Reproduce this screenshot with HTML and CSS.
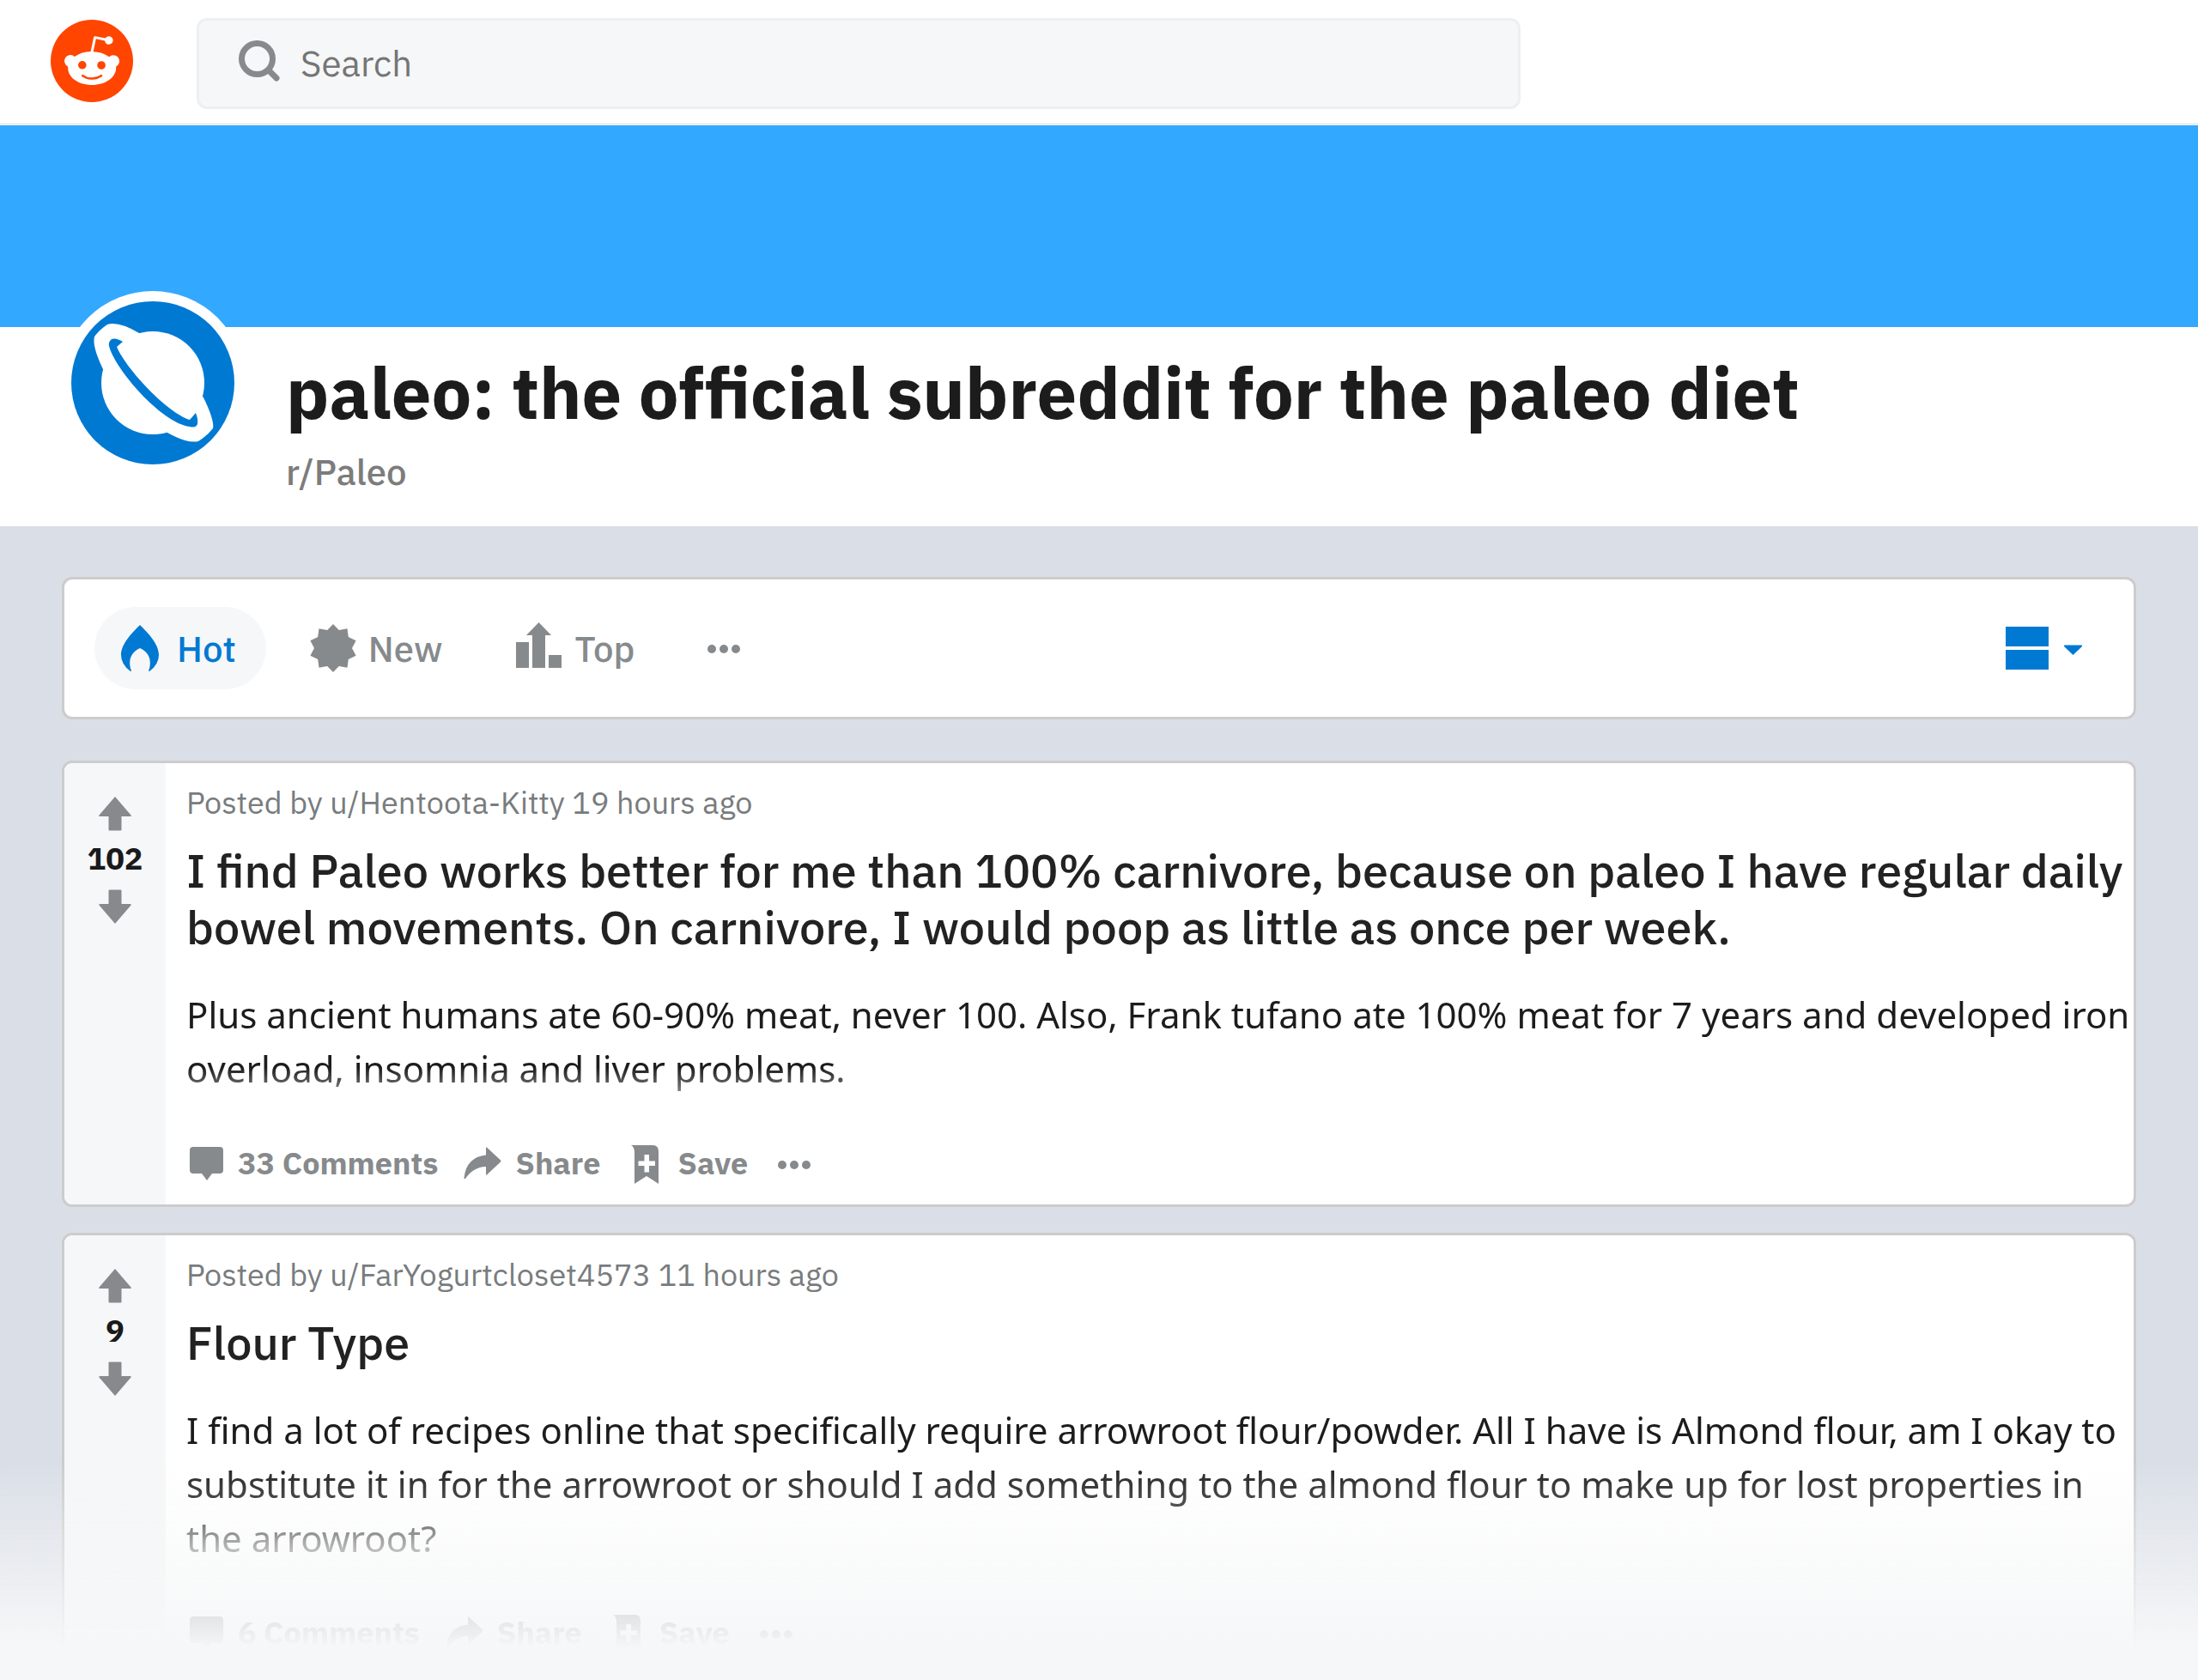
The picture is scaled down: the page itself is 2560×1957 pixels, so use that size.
FILE: index.html
```html
<!DOCTYPE html>
<html lang="en">
<head>
    <meta charset="UTF-8">
    <meta name="viewport" content="width=device-width, initial-scale=1.0">
    <title>paleo: the official subreddit for the paleo diet</title>
    <link rel="stylesheet" href="styles.css">
</head>
<body>
    <!-- Shared icons -->
    <svg class="sprite" aria-hidden="true">
        <symbol id="icon-up" viewBox="0 0 48 48">
            <path d="M24 4 42.500 25.500Q43.500 27 41.500 27H31.500V42.500Q31.500 43.500 30.500 43.500H17.500Q16.500 43.500 16.500 42.500V27H6.500Q4.500 27 5.500 25.500Z"/>
        </symbol>
        <symbol id="icon-down" viewBox="0 0 48 48">
            <path d="M24 44 42.500 22.500Q43.500 21 41.500 21H31.500V5.500Q31.500 4.500 30.500 4.500H17.500Q16.500 4.500 16.500 5.500V21H6.500Q4.500 21 5.500 22.500Z"/>
        </symbol>
        <symbol id="icon-comment" viewBox="0 0 48 48">
            <path d="M8 4H39Q43 4 43 8V31Q43 35 39 35H30L24 43 18 35H8Q4 35 4 31V8Q4 4 8 4Z"/>
        </symbol>
        <symbol id="icon-share" viewBox="0 0 48 48">
            <path d="M26 5.500Q26 3.500 27.500 5L43 19.500Q44 20.500 43 21.500L27.500 36Q26 37.500 26 35.500V27Q11 27.500 2 41Q.500 42 .500 40Q3 16 26 13.500Z"/>
        </symbol>
        <symbol id="icon-save" viewBox="0 0 48 48">
            <path fill-rule="evenodd" d="M6 2H31Q38 2 38 9V47L24 38 10 47V11Q10 4 6 2ZM21.500 13V20.500H14.500V26H21.500V33.500H27V26H34V20.500H27V13Z"/>
        </symbol>
        <symbol id="icon-dots" viewBox="0 0 48 48">
            <circle cx="10" cy="25" r="5"/>
            <circle cx="24" cy="25" r="5"/>
            <circle cx="38" cy="25" r="5"/>
        </symbol>
    </svg>

    <header class="topbar">
        <a class="logo" href="#" aria-label="Home">
            <svg viewBox="0 0 20 20">
                <circle fill="#ff4500" cx="10" cy="10" r="10"/>
                <path fill="#fff" d="M16.67,10A1.46,1.46,0,0,0,14.2,9a7.12,7.12,0,0,0-3.85-1.23L11,4.65,13.14,5.1a1,1,0,1,0,.13-0.61L10.82,4a0.31,0.31,0,0,0-.37.24L9.71,7.71a7.14,7.14,0,0,0-3.9,1.23A1.46,1.46,0,1,0,4.2,11.33a2.87,2.87,0,0,0,0,.44c0,2.24,2.61,4.06,5.83,4.06s5.83-1.82,5.83-4.06a2.87,2.87,0,0,0,0-.44A1.46,1.46,0,0,0,16.67,10Zm-10,1a1,1,0,1,1,1,1A1,1,0,0,1,6.67,11Zm5.81,2.75a3.84,3.84,0,0,1-2.47.77,3.84,3.84,0,0,1-2.47-.77,0.27,0.27,0,0,1,.38-0.38A3.27,3.27,0,0,0,10,14a3.28,3.28,0,0,0,2.09-.61A0.27,0.27,0,1,1,12.48,13.79Zm-0.18-1.71a1,1,0,1,1,1-1A1,1,0,0,1,12.29,12.08Z"/>
            </svg>
        </a>
        <form class="search">
            <label class="search-icon" for="search" aria-label="Search">
                <svg viewBox="0 0 48 48">
                    <circle cx="21.500" cy="21.500" r="18"/>
                    <path d="M35 35 44 44"/>
                </svg>
            </label>
            <input type="search" id="search" name="q" placeholder="Search">
        </form>
    </header>

    <div class="banner"></div>
    <section class="community">
        <div class="avatar">
            <svg viewBox="0 0 190 190">
                <circle fill="#0079d3" cx="95" cy="95" r="95"/>
                <circle fill="#fff" cx="95" cy="95" r="60"/>
                <path fill="#fff" d="M42 27Q55 23 79 37L154 112Q167 139 165 148Q159 156 148 163Q135 166 112 153L37 79Q24 52 27 41Q33 33 42 27Z"/>
                <path fill="#0079d3" d="M60 47Q52 42 47 44Q43 47 44 52C50 78 105 142 138 146Q145 148 147 143Q148 138 145 130L138 138C112 130 64 79 53 53Z"/>
            </svg>
        </div>
        <div class="community-text">
            <h1>paleo: the official subreddit for the paleo diet</h1>
            <h2>r/Paleo</h2>
        </div>
    </section>

    <main class="feed">
        <nav class="card sort">
            <a class="sort-link active" href="#">
                <svg viewBox="0 0 54 54">
                    <path d="M25 0C34 9 47 22 47 35Q47 46 36 54Q34 54 36 51Q40 34 25 27Q10 34 14 51Q16 54 14 54Q3 46 3 35C3 22 16 9 25 0Z"/>
                </svg>
                Hot
            </a>
            <a class="sort-link" href="#">
                <svg viewBox="0 0 54 54">
                    <path d="M27 -1 33.800 6.100 43.500 4.300 44.800 14.100 53.600 18.300 49 27 53.600 35.700 44.800 39.900 43.500 49.700 33.800 47.900 27 55 20.200 47.900 10.500 49.700 9.200 39.900 .400 35.700 5 27 .400 18.300 9.200 14.100 10.500 4.300 20.200 6.100Z"/>
                </svg>
                New
            </a>
            <a class="sort-link" href="#">
                <svg viewBox="0 0 54 54">
                    <path d="M0 20H15V50H0ZM26.500 -3 41 12H34V50H19V12H12ZM38 35H53V50H38Z"/>
                </svg>
                Top
            </a>
            <button class="sort-more" type="button" aria-label="More sort options">
                <svg viewBox="0 0 48 48"><use href="#icon-dots"/></svg>
            </button>
            <button class="layout-switch" type="button" aria-label="Change view">
                <svg viewBox="0 0 90 54">
                    <path d="M0 2H50V25H0ZM0 29H50V52H0ZM69 23.500H88Q90 23.500 88.500 25.500L78.500 35 68.500 25.500Q67 23.500 69 23.500Z"/>
                </svg>
            </button>
        </nav>

        <article class="card post">
            <div class="votes">
                <button type="button" aria-label="Upvote"><svg><use href="#icon-up"/></svg></button>
                <span class="score">102</span>
                <button type="button" aria-label="Downvote"><svg><use href="#icon-down"/></svg></button>
            </div>
            <div class="post-body">
                <p class="meta">Posted by <a href="#">u/Hentoota-Kitty</a> <a href="#">19 hours ago</a></p>
                <h3>I find Paleo works better for me than 100% carnivore, because on paleo I have regular daily bowel movements. On carnivore, I would poop as little as once per week.</h3>
                <div class="excerpt">
                    <p>Plus ancient humans ate 60-90% meat, never 100. Also, Frank tufano ate 100% meat for 7 years and developed iron overload, insomnia and liver problems.</p>
                </div>
                <div class="actions">
                    <a href="#"><svg><use href="#icon-comment"/></svg>33 Comments</a>
                    <button type="button"><svg><use href="#icon-share"/></svg>Share</button>
                    <button type="button"><svg><use href="#icon-save"/></svg>Save</button>
                    <button type="button" aria-label="More options"><svg><use href="#icon-dots"/></svg></button>
                </div>
            </div>
        </article>

        <article class="card post">
            <div class="votes">
                <button type="button" aria-label="Upvote"><svg><use href="#icon-up"/></svg></button>
                <span class="score">9</span>
                <button type="button" aria-label="Downvote"><svg><use href="#icon-down"/></svg></button>
            </div>
            <div class="post-body">
                <p class="meta">Posted by <a href="#">u/FarYogurtcloset4573</a> <a href="#">11 hours ago</a></p>
                <h3>Flour Type</h3>
                <div class="excerpt">
                    <p>I find a lot of recipes online that specifically require arrowroot flour/powder. All I have is Almond flour, am I okay to substitute it in for the arrowroot or should I add something to the almond flour to make up for lost properties in the arrowroot?</p>
                </div>
                <div class="actions">
                    <a href="#"><svg><use href="#icon-comment"/></svg>6 Comments</a>
                    <button type="button"><svg><use href="#icon-share"/></svg>Share</button>
                    <button type="button"><svg><use href="#icon-save"/></svg>Save</button>
                    <button type="button" aria-label="More options"><svg><use href="#icon-dots"/></svg></button>
                </div>
            </div>
        </article>
    </main>
    <div class="fade"></div>
</body>
</html>
```
FILE: styles.css
```css
* {
    box-sizing: border-box;
}
body {
    margin: 0;
    background-color: #dadfe7;
    color: #1c1c1c;
    font-family: "IBM Plex Sans", "Noto Sans", sans-serif;
    font-size: 42px;
}
h1, h2, h3, p {
    margin: 0;
}
a {
    color: inherit;
    text-decoration: none;
}
button {
    padding: 0;
    border: none;
    background: none;
    color: inherit;
    font: inherit;
    cursor: pointer;
}
svg {
    display: block;
    fill: currentColor;
    overflow: visible;
}
.sprite {
    display: none;
}

/* Top bar */
.topbar {
    display: flex;
    align-items: center;
    height: 146px;
    padding: 4px 59px 0;
    gap: 74px;
    background: #fff;
    border-bottom: 3px solid #edeff1;
}
.logo {
    flex: none;
    width: 96px;
    padding-bottom: 6px;
}
.search {
    display: flex;
    align-items: center;
    flex: 0 1 1542px;
    height: 106px;
    padding-left: 46px;
    gap: 24px;
    background: #f6f7f8;
    border: 3px solid #edeff1;
    border-radius: 12px;
}
.search-icon {
    flex: none;
    width: 48px;
    padding-bottom: 6px;
    color: #878a8c;
}
.search-icon svg {
    fill: none;
    stroke: currentColor;
    stroke-width: 7;
    stroke-linecap: round;
}
.search input {
    flex: 1;
    min-width: 0;
    padding: 0;
    border: none;
    outline: none;
    background: none;
    font: inherit;
}
.search input::placeholder {
    color: #757575;
}

/* Community header */
.banner {
    height: 235px;
    background: #33a8ff;
}
.community {
    display: flex;
    align-items: flex-start;
    gap: 48px;
    padding: 28px 71px 39px;
    background: #fff;
}
.avatar {
    flex: none;
    width: 214px;
    margin-top: -70px;
    margin-bottom: -40px;
    border: 12px solid #fff;
    border-radius: 50%;
    background: #fff;
}
h1 {
    font-size: 83px;
    font-weight: 700;
    line-height: 96px;
}
h2 {
    margin-top: 21px;
    color: #7c7c7c;
    font-size: 42px;
    font-weight: 500;
    line-height: 48px;
}

/* Feed */
.feed {
    padding: 59px 72px 0;
}
.card {
    background: #fff;
    border: 3px solid #ccc;
    border-radius: 12px;
    overflow: hidden;
}
.sort {
    display: flex;
    align-items: center;
    height: 166px;
    margin-bottom: 48px;
    padding: 0 59px 0 35px;
    gap: 23px;
}
.sort-link {
    display: flex;
    align-items: center;
    height: 96px;
    padding: 0 35px 0 28px;
    gap: 14px;
    border-radius: 48px;
    color: #878a8c;
    font-weight: 500;
}
.sort-link svg {
    width: 54px;
    height: 54px;
}
.sort-more {
    padding: 0 22px;
    color: #878a8c;
}
.sort-more svg {
    width: 48px;
    height: 48px;
}
.sort-link.active {
    background: #f6f7f8;
    color: #0079d3;
}
.layout-switch {
    margin-left: auto;
    color: #0079d3;
}
.layout-switch svg {
    width: 90px;
    height: 54px;
}

/* Posts */
.post {
    display: flex;
    margin-bottom: 30px;
}
.votes {
    display: flex;
    flex-direction: column;
    align-items: center;
    flex: none;
    width: 118px;
    padding-top: 35px;
    background: #f6f7f8;
    color: #878a8c;
}
.votes svg {
    width: 48px;
    height: 48px;
}
.score {
    padding-bottom: 4px;
    color: #1a1a1b;
    font-size: 36px;
    font-weight: 700;
    line-height: 56px;
}
.post-body {
    flex: 1;
    min-width: 0;
    padding: 22px 4px 23px 24px;
}
.meta {
    color: #787c7e;
    font-size: 36px;
    line-height: 48px;
}
h3 {
    margin: 22px 0 37px;
    color: #222;
    font-size: 54px;
    font-weight: 500;
    line-height: 66px;
}
.excerpt {
    margin-bottom: 23px;
    padding-bottom: 30px;
    font-family: "Noto Sans", sans-serif;
    font-size: 42px;
    line-height: 63px;
    -webkit-mask-image: linear-gradient(180deg, #000 60%, transparent);
    mask-image: linear-gradient(180deg, #000 60%, transparent);
}
.actions {
    display: flex;
    gap: 30px;
    color: #878a8c;
    font-size: 36px;
    font-weight: 700;
    line-height: 51px;
}
.actions a,
.actions button {
    display: flex;
    gap: 12px;
}
.actions svg {
    width: 48px;
    height: 48px;
    margin-top: 3px;
}

/* Fade over the bottom of the feed */
.fade {
    position: fixed;
    right: 0;
    bottom: 0;
    left: 0;
    height: 257px;
    background: linear-gradient(180deg, rgba(246, 247, 248, 0), #f6f7f8 86%);
    pointer-events: none;
}
```
